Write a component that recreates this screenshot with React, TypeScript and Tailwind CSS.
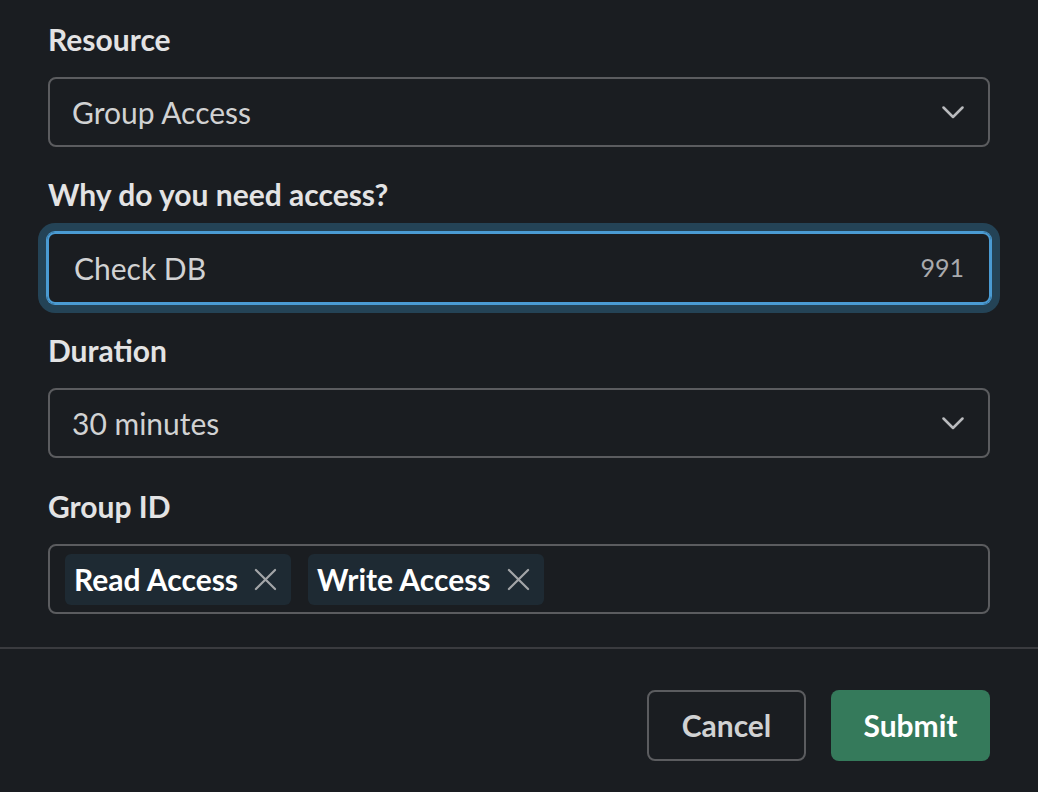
const font = { fontFamily: 'Lato, "Noto Sans", sans-serif' };

function Chevron() {
  return (
    <svg width="22" height="13" viewBox="0 0 22 13" fill="none" className="text-[#b9babd]">
      <path d="M1.5 1.5l9.5 9.5 9.5-9.5" stroke="currentColor" strokeWidth="2.5" strokeLinecap="round" strokeLinejoin="round" />
    </svg>
  );
}

function Cross() {
  return (
    <svg width="23" height="23" viewBox="0 0 24 24" fill="none" className="text-[#a3a5a8]">
      <path d="M2 2l20 20M22 2L2 22" stroke="currentColor" strokeWidth="2.3" strokeLinecap="round" />
    </svg>
  );
}

function Label({ children }: { children: string }) {
  return (
    <div className="text-[30px] leading-[36px] font-bold text-[#e3e3e4] mb-[20px]">
      {children}
    </div>
  );
}

function Select({ value }: { value: string }) {
  return (
    <div className="h-[70px] rounded-lg border-2 border-[#5b5c5f] flex items-center justify-between pl-[22px] pr-[24px]">
      <span className="text-[30px] text-[#d1d2d3]">{value}</span>
      <Chevron />
    </div>
  );
}

function Chip({ label }: { label: string }) {
  return (
    <div className="h-[51px] rounded-md bg-[#1e2a33] flex items-center pl-[9px] pr-[14px] gap-[16px]">
      <span className="text-[30px] font-bold text-white">{label}</span>
      <Cross />
    </div>
  );
}

export default function App() {
  return (
    <div style={font} className="w-[1038px] h-[792px] bg-[#1a1d21] overflow-hidden flex flex-col">
      <div className="px-[48px] pt-[21px] flex flex-col">
        {/* Resource */}
        <Label>Resource</Label>
        <Select value="Group Access" />

        {/* Reason */}
        <div className="mt-[29px]">
          <Label>Why do you need access?</Label>
          <div className="h-[72px] -mx-[1px] rounded-lg border-2 border-[#4a9bd3] shadow-[0_0_0_1px_#4a9bd3,0_0_0_9px_#244356] flex items-center justify-between pl-[25px] pr-[25px]">
            <span className="text-[30px] text-[#d1d2d3]">Check DB</span>
            <span className="text-[25px] text-[#a9aaad]">991</span>
          </div>
        </div>

        {/* Duration */}
        <div className="mt-[28px]">
          <Label>Duration</Label>
          <Select value="30 minutes" />
        </div>

        {/* Group ID */}
        <div className="mt-[30px]">
          <Label>Group ID</Label>
          <div className="h-[70px] rounded-lg border-2 border-[#5b5c5f] flex items-center gap-[17px] px-[15px]">
            <Chip label="Read Access" />
            <Chip label="Write Access" />
          </div>
        </div>
      </div>

      <div className="mt-[33px] h-[2px] bg-[#3a3b3f]" />

      <div className="flex justify-end gap-[25px] px-[48px] pt-[41px]">
        <button className="w-[159px] h-[71px] rounded-lg border-2 border-[#5b5c5f] text-[30px] font-bold text-[#d1d2d3]">
          Cancel
        </button>
        <button className="w-[159px] h-[71px] rounded-lg bg-[#357a5b] text-[30px] font-bold text-white">
          Submit
        </button>
      </div>
    </div>
  );
}
